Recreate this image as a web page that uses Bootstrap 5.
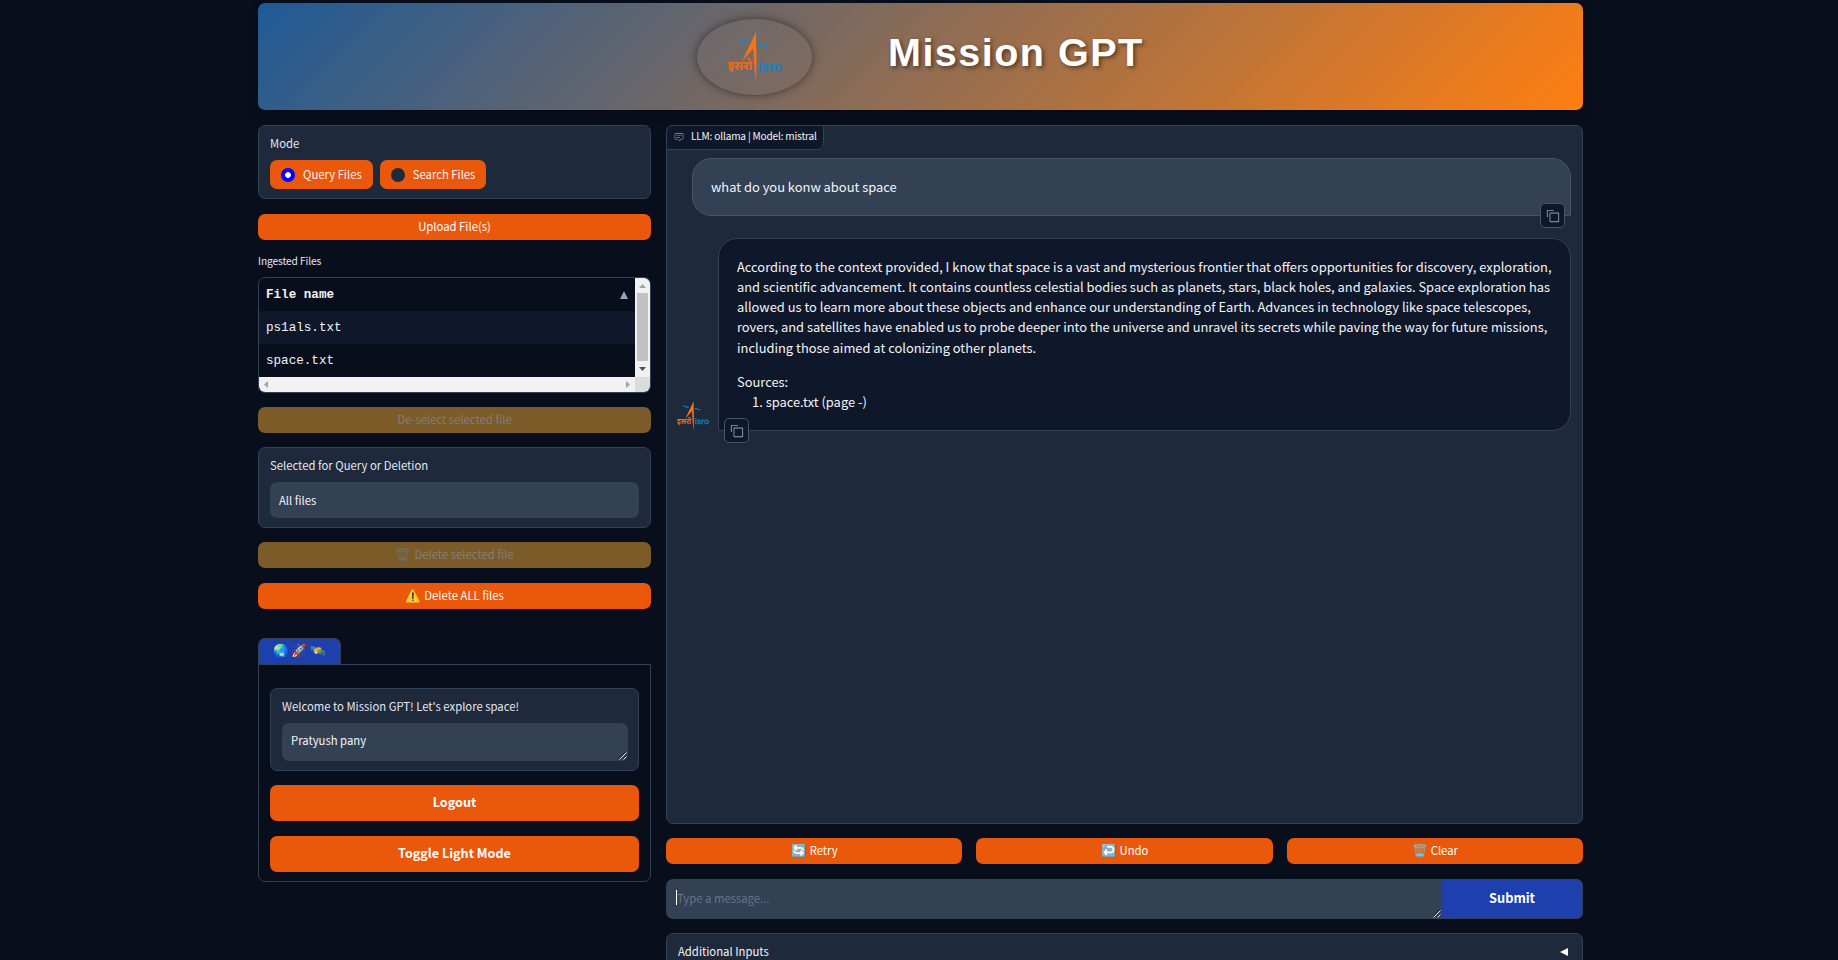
<!DOCTYPE html>
<html lang="en">
<head>
<meta charset="utf-8">
<title>Mission GPT</title>
<link href="https://cdn.jsdelivr.net/npm/bootstrap@5.3.0/dist/css/bootstrap.min.css" rel="stylesheet">
<style>
:root{--line:#334155;--panel:#1e293b;--field:#334155;--ink:#f3f4f6;--orange:#ea580c;--deep:#0f172a}
body{background:#080e1b;color:var(--ink);font-family:"Noto Sans CJK SC",sans-serif;font-size:11.3px;line-height:18px;height:960px;overflow:hidden}
.page{width:1325px;margin-left:258px;padding-top:3px}
.hero{height:107px;border-radius:7px;background:linear-gradient(135deg,#1f5a96,#ff7f11);box-shadow:0 4px 8px rgba(0,0,0,.2)}
.hero-logo{width:115px;height:76px;border-radius:50%;margin:16px 0 0 439px;box-shadow:0 0 10px rgba(0,0,0,.5);background:rgba(120,110,110,.25)}
.hero-logo svg{margin-top:13px}
.hero-title{font:700 39.6px/46px "Liberation Sans",sans-serif;letter-spacing:1.45px;color:#fff;text-shadow:2px 2px 4px rgba(0,0,0,.5);margin:26px 0 0 76px;white-space:nowrap}
.cols{gap:15px;margin-top:15px}
.side{width:393px;flex:none}
.main{width:917px;flex:none}
.box{background:var(--panel);border:1px solid var(--line);border-radius:7px}
.lbl{color:#e2e8f0;height:18px;line-height:18px}
.act{display:flex;align-items:center;justify-content:center;gap:3px;background:var(--orange);color:#fff;border:0;border-radius:7px;height:26px;width:100%;padding:0 0 3px;line-height:18px;font-size:11.3px}
.act span{font-size:12.6px}
.act.off{background:#7b5c29;color:#857d78}
.act.off span{opacity:.5;filter:hue-rotate(10deg) brightness(.7)}
.act.big{height:36px;font-weight:700;font-size:12.6px;padding-bottom:2px}
.pick{height:29px;border-radius:7px;background:var(--orange);color:#f3f4f6;padding:0 11px}
.pick b{font-weight:400;margin-top:-2px}
.dot{width:14px;height:14px;border-radius:50%;background:var(--panel);margin-right:8px}
.dot.on{background:radial-gradient(circle,#fff 0 2.5px,#0000ff 3.2px)}
.field{background:var(--field);border-radius:7px;padding:0 9px;position:relative}
.grip{position:absolute;right:1px;bottom:1px}
.files{height:116px;border:1px solid var(--line);border-radius:7px;overflow:hidden;font:12.6px/35px "Liberation Mono",monospace;display:grid;grid-template-columns:1fr 15px;grid-template-rows:99px 1fr;margin-top:7px}
.files .line{height:33px;padding:0 7px}
.tab-hd{width:83px;height:27px;background:#1e40af;border:1px solid var(--line);border-bottom:0;border-radius:7px 7px 0 0;margin-top:29px;font-size:12.6px;padding-bottom:4px}
.tab-bd{border:1px solid var(--line);border-radius:0 0 7px 7px;height:218px;padding:23px 11px 0;margin-top:-1px}
.chat{height:699px;position:relative}
.chat-lbl{position:absolute;left:-1px;top:-1px;width:158px;height:25px;background:var(--deep);border:1px solid var(--line);border-radius:7px 0 7px 0;padding-left:7px;font-size:10.1px;letter-spacing:-.18px}
.chat-lbl b{font-weight:400;margin-top:-3px;white-space:nowrap}
.bub{position:relative;border:1px solid #475569;border-radius:19px;font-size:12.9px;line-height:20.25px;padding:17.6px 18px}
.bub.me{background:#334155;border-bottom-right-radius:0;margin:32px 11px 0 25px;height:58px}
.bub.bot{background:var(--deep);border-color:#334155;border-bottom-left-radius:0;width:853px;height:193px}
.cp{position:absolute;width:25px;height:25px;border:1px solid #475569;border-radius:5px;background:var(--deep);bottom:-13px;display:flex;align-items:center;justify-content:center}
.entry{height:40px;border-radius:7px;background:var(--field);margin-top:15px}
.entry b{font-weight:400;margin-top:-2px}
.send{width:141px;background:#1e40af;border:1px solid var(--line);border-left:0;border-radius:0 7px 7px 0;font-weight:700;font-size:12.8px;color:#fff;padding-bottom:3px}
</style>
</head>
<body>
<svg width="0" height="0" class="position-absolute">
<defs>
<symbol id="isro" viewBox="0 0 54 50">
<path d="M28 0L28.500 32L28 50L26.300 34L25.300 16.500L14 29.500Z" fill="#f97316"/>
<path d="M11 7.700h4v2h-4zM15.500 9h4v2h-4zM30 11.500h4v2h-4zM34.500 13h4.500v2h-4.500zM19 10l2 1.500" fill="#0e88d3"/>
<text x="0" y="38" font-size="12.500" font-weight="700" fill="#ed6c1b" textLength="24" lengthAdjust="spacingAndGlyphs" font-family="Noto Sans Devanagari,sans-serif">इसरो</text>
<text x="30" y="38.500" font-size="13" fill="#1183cb" stroke="#1183cb" stroke-width=".5" textLength="24" lengthAdjust="spacingAndGlyphs" font-family="DejaVu Sans,sans-serif">isro</text>
</symbol>
<symbol id="copy" viewBox="0 0 32 32"><path fill="#94a3b8" d="M28 10v18H10V10h18m0-2H10a2 2 0 0 0-2 2v18a2 2 0 0 0 2 2h18a2 2 0 0 0 2-2V10a2 2 0 0 0-2-2Z"/><path fill="#94a3b8" d="M4 18H2V4a2 2 0 0 1 2-2h14v2H4Z"/></symbol>
<symbol id="grip" viewBox="0 0 8 8"><path d="M.5 7.500L7.500 .5M4.500 7.500L7.500 4.500" stroke="#e5e7eb" stroke-width="1"/><path d="M0 6.500L6.500 0M3.500 7L7 3.500" stroke="#111" stroke-width=".6"/></symbol>
</defs>
</svg>
<div class="page">
<header class="hero d-flex align-items-start">
<div class="hero-logo d-flex justify-content-center"><svg width="54" height="50"><use href="#isro"/></svg></div>
<h1 class="hero-title">Mission GPT</h1>
</header>
<div class="cols d-flex">
<aside class="side">
<div class="box" style="height:74px;padding:8px 11px">
<div class="lbl">Mode</div>
<div class="d-flex" style="gap:7px;margin-top:8px">
<label class="pick d-flex align-items-center"><span class="dot on"></span><b>Query Files</b></label>
<label class="pick d-flex align-items-center"><span class="dot"></span><b>Search Files</b></label>
</div></div>
<button class="act" style="margin-top:15px">Upload File(s)</button>
<div class="lbl" style="margin-top:12px;font-size:10.2px;letter-spacing:-.1px">Ingested Files</div>
<div class="files">
<div><div class="line d-flex justify-content-between fw-bold">File name<svg width="8" height="8" viewBox="0 0 8 8" style="margin-top:13px"><path d="M4 0L8 8H0Z" fill="#94a3b8"/></svg></div>
<div class="line" style="background:#0f172a">ps1als.txt</div><div class="line">space.txt</div></div>
<svg width="15" height="99"><rect width="15" height="99" fill="#f1f1f1"/><rect x="2" y="15" width="11" height="68" fill="#c1c1c1"/><path d="M4 10L7.500 6L11 10Z" fill="#a3a3a3"/><path d="M4 89L7.500 93L11 89Z" fill="#505050"/></svg>
<svg width="376" height="15"><rect width="376" height="15" fill="#f1f1f1"/><path d="M9 4V11L5 7.500Z M367 4V11L371 7.500Z" fill="#a3a3a3"/></svg>
<div style="background:#dcdcdc"></div>
</div>
<button class="act off" style="margin-top:14px">De-select selected file</button>
<div class="box" style="height:81px;margin-top:14px;padding:9px 11px"><div class="lbl" style="margin-top:-1px">Selected for Query or Deletion</div><div class="field d-flex align-items-center" style="height:36px;margin-top:8px">All files</div></div>
<button class="act off" style="margin-top:14px"><span>🗑️</span>Delete selected file</button>
<button class="act" style="margin-top:15px"><span>⚠️</span>Delete ALL files</button>
<div class="tab-hd d-flex align-items-center justify-content-center">🌏 🚀 🛰️</div>
<div class="tab-bd">
<div class="box" style="height:83px;padding:9px 10px 9px 11px"><div class="lbl" style="margin-top:-1px">Welcome to Mission GPT! Let's explore space!</div><div class="field" style="height:38px;margin-top:8px;line-height:35px">Pratyush pany<svg class="grip" width="8" height="8"><use href="#grip"/></svg></div></div>
<button class="act big" style="margin-top:14px">Logout</button>
<button class="act big" style="margin-top:15px">Toggle Light Mode</button>
</div>
</aside>
<main class="main">
<section class="box chat">
<div class="chat-lbl d-flex align-items-center"><svg width="10" height="10" viewBox="0 0 32 32" style="margin:-1px 7px 0 0"><path fill="#94a3b8" d="M17.740 30L16 29l4-7h6a2 2 0 0 0 2-2V8a2 2 0 0 0-2-2H6a2 2 0 0 0-2 2v12a2 2 0 0 0 2 2h9v2H6a4 4 0 0 1-4-4V8a4 4 0 0 1 4-4h20a4 4 0 0 1 4 4v12a4 4 0 0 1-4 4h-4.840Z"/><path fill="#94a3b8" d="M8 10h16v2H8zm0 6h10v2H8z"/></svg><b>LLM: ollama | Model: mistral</b></div>
<div class="bub me">what do you konw about space<span class="cp" style="right:5px"><svg width="14" height="14"><use href="#copy"/></svg></span></div>
<div class="d-flex align-items-end" style="margin:22px 0 0 10px">
<svg width="32" height="30" style="margin-right:9px"><use href="#isro"/></svg>
<div class="bub bot"><div class="text-nowrap">According to the context provided, I know that space is a vast and mysterious frontier that offers opportunities for discovery, exploration,<br>and scientific advancement. It contains countless celestial bodies such as planets, stars, black holes, and galaxies. Space exploration has<br>allowed us to learn more about these objects and enhance our understanding of Earth. Advances in technology like space telescopes,<br>rovers, and satellites have enabled us to probe deeper into the universe and unravel its secrets while paving the way for future missions,<br>including those aimed at colonizing other planets.</div>
<div style="margin-top:14px">Sources:</div><div style="padding-left:15px">1. space.txt (page -)</div>
<span class="cp" style="left:5px"><svg width="14" height="14"><use href="#copy"/></svg></span></div>
</div>
</section>
<div class="d-flex" style="gap:14px;margin-top:14px">
<button class="act"><span>🔄</span>Retry</button><button class="act"><span>↩️</span>Undo</button><button class="act"><span>🗑️</span>Clear</button>
</div>
<div class="entry d-flex"><div class="flex-fill position-relative d-flex align-items-center" style="padding-left:10px;color:#64748b"><span style="width:1px;height:15px;background:#fff;margin-top:-3px"></span><b>Type a message...</b><svg class="grip" width="8" height="8"><use href="#grip"/></svg></div><button class="send">Submit</button></div>
<div class="box d-flex justify-content-between align-items-start" style="margin-top:14px;height:60px;padding:8px 14px 0 11px"><span>Additional Inputs</span><svg width="8" height="8" viewBox="0 0 8 8" style="margin-top:6px"><path d="M8 0V8L0 4Z" fill="#fff"/></svg></div>
</main>
</div>
</div>
<script src="https://cdn.jsdelivr.net/npm/bootstrap@5.3.0/dist/js/bootstrap.bundle.min.js"></script>
</body>
</html>
